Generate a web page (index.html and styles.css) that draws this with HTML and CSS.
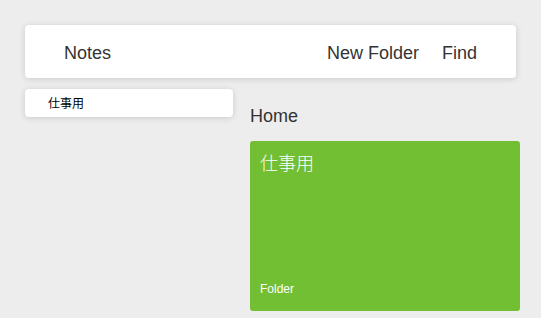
FILE: index.html
```html
<!DOCTYPE html>
<html>
<head>
<meta charset="utf-8">
<link rel="stylesheet" href="styles.css">
</head>
<body>
<div class="app">
  <header class="navbar">
    <span class="brand">Notes</span>
    <nav class="actions">
      <span class="action">New Folder</span>
      <span class="action">Find</span>
    </nav>
  </header>
  <div class="content">
    <aside class="sidebar">
      <div class="side-item">仕事用</div>
    </aside>
    <main class="main">
      <h2 class="crumb">Home</h2>
      <div class="card">
        <div class="card-title">仕事用</div>
        <div class="card-type">Folder</div>
      </div>
    </main>
  </div>
</div>
</body>
</html>
```

FILE: styles.css
```css
html, body {
  margin: 0;
  padding: 0;
  background: #ededed;
  font-family: "Liberation Sans", Arial, "Noto Sans CJK JP", sans-serif;
  color: #333;
}
.app {
  padding: 25px 0 0 25px;
}
.navbar {
  width: 491px;
  height: 53px;
  box-sizing: border-box;
  background: #fff;
  border-radius: 4px;
  box-shadow: 0 1px 6px rgba(0,0,0,0.15);
  display: flex;
  align-items: center;
  justify-content: space-between;
  padding: 3px 39px 0;
  font-size: 18px;
}
.actions {
  display: flex;
  gap: 23px;
}
.content {
  display: flex;
  margin-top: 11px;
}
.sidebar {
  width: 208px;
}
.side-item {
  height: 28px;
  background: #fff;
  border-radius: 4px;
  box-shadow: 0 1px 6px rgba(0,0,0,0.15);
  font-size: 12px;
  color: #000;
  line-height: 28px;
  padding-left: 23px;
  font-family: "Noto Sans CJK JP", sans-serif;
}
.main {
  margin-left: 17px;
}
.crumb {
  margin: 0;
  padding-top: 15px;
  font-size: 18px;
  font-weight: normal;
  line-height: 24px;
  height: 37px;
}
.card {
  width: 270px;
  height: 170px;
  box-sizing: border-box;
  background: #72bf33;
  border-radius: 3px;
  color: #fff;
  padding: 9px 10px 15px;
  display: flex;
  flex-direction: column;
  justify-content: space-between;
}
.card-title {
  font-size: 18px;
  line-height: 24px;
  font-family: "Noto Sans CJK JP", sans-serif;
  font-weight: 300;
}
.card-type {
  font-size: 12px;
  line-height: 14px;
}
```
